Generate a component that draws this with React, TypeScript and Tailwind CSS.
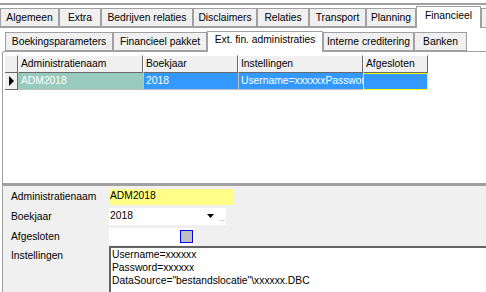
const mainTabs = [
  { label: 'Algemeen', w: 59 },
  { label: 'Extra', w: 42 },
  { label: 'Bedrijven relaties', w: 92 },
  { label: 'Disclaimers', w: 64 },
  { label: 'Relaties', w: 52 },
  { label: 'Transport', w: 57 },
  { label: 'Planning', w: 50 },
];

const subTabs = [
  { label: 'Boekingsparameters', w: 108 },
  { label: 'Financieel pakket', w: 94 },
];

const subTabsRight = [
  { label: 'Interne creditering', w: 91 },
  { label: 'Banken', w: 53 },
];

const Tab = ({ label, w }: { label: string; w: number }) => (
  <div
    className="h-[19px] shrink-0 border-t border-l border-r border-t-white border-l-white border-r-[#a0a0a0] bg-[#f0f0f0] outline outline-1 outline-[#a0a0a0] -outline-offset-1 flex items-center justify-center leading-none"
    style={{ width: w }}
  >
    {label}
  </div>
);

export default function App() {
  return (
    <div className="w-[486px] h-[292px] overflow-hidden bg-white text-black text-[10.3px] font-['Liberation_Sans',Arial,sans-serif]">
      <div className="h-[3px]" />
      <div className="h-[2px] bg-[#a0a0a0]" />

      {/* main tabs */}
      <div className="flex items-end h-[23px] border-b border-[#a0a0a0]">
        {mainTabs.map(t => (
          <Tab key={t.label} {...t} />
        ))}
        <div className="w-[65px] h-[22px] -mb-px shrink-0 bg-white border-t border-l border-r border-[#a0a0a0] flex items-center justify-center pb-[3px] leading-none">
          Financieel
        </div>
        <div className="flex-1 h-[19px] border-l border-t border-[#a0a0a0] bg-[#f0f0f0]" />
      </div>

      {/* sub tabs */}
      <div className="flex items-end h-[24px] border-b border-[#a0a0a0] ml-[3px] pl-[2px]">
        {subTabs.map(t => (
          <Tab key={t.label} {...t} />
        ))}
        <div className="w-[116px] h-[21px] -mb-px shrink-0 bg-white border-t border-l border-r border-[#a0a0a0] flex items-center justify-center pb-[3px] leading-none">
          Ext. fin. administraties
        </div>
        {subTabsRight.map(t => (
          <Tab key={t.label} {...t} />
        ))}
      </div>

      {/* grid */}
      <div className="h-[131px] ml-[2px] border-l border-[#a0a0a0] pt-[3px] pl-[2px]">
        <div className="flex h-[18px]">
          <div className="w-[13px] bg-[#f0f0f0] border-r border-b border-[#696969] border-t border-t-white" />
          {[
            ['Administratienaam', 125],
            ['Boekjaar', 95],
            ['Instellingen', 125],
            ['Afgesloten', 65],
          ].map(([l, w]) => (
            <div
              key={l as string}
              className="bg-[#f0f0f0] border-r border-b border-[#696969] border-l border-l-white border-t border-t-white pl-[2px] flex items-center leading-none"
              style={{ width: w as number }}
            >
              {l}
            </div>
          ))}
        </div>
        <div className="flex h-[17px] text-white">
          <div className="w-[13px] bg-[#f0f0f0] border-r border-b border-[#696969] flex items-center justify-center">
            <svg width="6" height="10" viewBox="0 0 6 10">
              <path d="M1 0 L6 5 L1 10 Z" fill="#000" />
            </svg>
          </div>
          <div className="w-[125px] bg-[#99cbbd] border-b border-[#c0c0c0] pl-[3px] flex items-center leading-none">ADM2018</div>
          <div className="w-[95px] bg-[#3399ff] border-l border-b border-[#c0c0c0] pl-[2px] flex items-center leading-none">2018</div>
          <div className="w-[125px] bg-[#3399ff] border-l border-b border-[#c0c0c0] pl-[2px] flex items-center leading-none overflow-hidden whitespace-nowrap">
            Username=xxxxxxPassword=xxxxxx
          </div>
          <div className="w-[65px] bg-[#3399ff] border border-[#ffff00]" />
        </div>
      </div>

      {/* detail panel */}
      <div className="h-[110px] ml-[2px] border-l border-[#a0a0a0] border-t-[3px] border-t-[#a0a0a0] bg-[#f0f0f0] flex flex-col">
        <div className="flex flex-col gap-[3px] pt-[2px]">
          <div className="flex items-center h-[17px]">
            <span className="w-[106px] pl-[8px]">Administratienaam</span>
            <div className="w-[124px] h-[16px] bg-[#ffff88] flex items-center pl-[1px] leading-none">ADM2018</div>
          </div>
          <div className="flex items-center h-[17px]">
            <span className="w-[106px] pl-[8px]">Boekjaar</span>
            <div className="w-[117px] h-[17px] bg-white flex items-center pl-[1px] leading-none relative">
              2018
              <svg className="absolute left-[98px] top-[6px]" width="7" height="4" viewBox="0 0 7 4">
                <path d="M0 0 H7 L3.5 4 Z" fill="#000" />
              </svg>
              <span className="absolute left-[110px] top-[7px] text-[7px] text-[#606060] leading-none">...</span>
            </div>
          </div>
          <div className="flex items-center h-[17px]">
            <span className="w-[106px] pl-[8px]">Afgesloten</span>
            <div className="w-[86px] h-[17px] bg-white relative">
              <div className="absolute left-[71px] top-[2px] w-[13px] h-[13px] bg-[#c0c0c0] border border-[#0000ff]" />
            </div>
          </div>
        </div>
        <div className="flex flex-1 mt-[1px]">
          <span className="w-[106px] pl-[8px] pt-[2px]">Instellingen</span>
          <div className="flex-1 bg-white border-t-2 border-l-2 border-[#646464] pl-[1px] leading-[13px]">
            <div>Username=xxxxxx</div>
            <div>Password=xxxxxx</div>
            <div>DataSource="bestandslocatie"\xxxxxx.DBC</div>
          </div>
        </div>
      </div>
    </div>
  );
}
